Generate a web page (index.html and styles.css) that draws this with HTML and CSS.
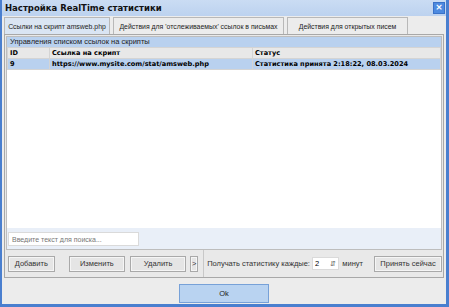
FILE: index.html
```html
<!DOCTYPE html>
<html lang="ru">
    <head>
        <meta charset="UTF-8" />
        <title>Настройка RealTime статистики</title>
        <link rel="stylesheet" href="styles.css">
    </head>
    <body>
        <div class="window">
            <div class="titlebar">
                <span class="title">Настройка RealTime статистики</span>
                <span class="close">&#215;</span>
            </div>
            <div class="client">
                <div class="tabs">
                    <div class="tab active w-tab1">Ссылки на скрипт amsweb.php</div>
                    <div class="tab w-tab2">Действия для 'отслеживаемых' ссылок в письмах</div>
                    <div class="tab w-tab3">Действия для открытых писем</div>
                </div>
                <div class="page">
                    <div class="group">
                        <div class="group-caption">Управления списком ссылок на скрипты</div>
                        <div class="grid">
                            <table>
                                <tr>
                                    <th class="col-id">ID</th>
                                    <th class="col-url">Ссылка на скрипт</th>
                                    <th>Статус</th>
                                </tr>
                                <tr class="selected">
                                    <td>9</td>
                                    <td>https://www.mysite.com/stat/amsweb.php</td>
                                    <td>Статистика принята 2:18:22, 08.03.2024</td>
                                </tr>
                            </table>
                        </div>
                        <div class="search-bar">
                            <input type="text" class="search" placeholder="Введите текст для поиска..." />
                        </div>
                    </div>
                    <div class="toolbar">
                        <button class="btn w-add">Добавить</button>
                        <button class="btn w-edit">Изменить</button>
                        <button class="btn w-del">Удалить</button>
                        <button class="btn w-more">&gt;</button>
                        <span class="sep"></span>
                        <span class="label">Получать статистику каждые:</span>
                        <span class="spin"><span>2</span><span class="spin-arr">&#8693;</span></span>
                        <span class="label minutes">минут</span>
                        <button class="btn w-now">Принять сейчас</button>
                    </div>
                </div>
                <div class="footer">
                    <button class="ok">Ok</button>
                </div>
            </div>
        </div>
    </body>
</html>
```
FILE: styles.css
```css
body {
    margin: 0;
    font-family: "Liberation Sans", Arial, sans-serif;
    font-size: 7.5px;
    color: #000;
}
.window {
    width: 449px;
    height: 307px;
    box-sizing: border-box;
    border: 2px solid #4a7fcf;
    border-top: none;
    border-right-width: 3px;
    border-bottom-width: 3px;
    background-color: #ececec;
    display: flex;
    flex-direction: column;
}
.titlebar {
    height: 16px;
    flex: none;
    box-sizing: border-box;
    background: linear-gradient(#cadcf3, #bcd2ef);
    display: flex;
    align-items: center;
    justify-content: space-between;
    padding: 0 1px 0 3px;
}
.title {
    font-family: "DejaVu Sans", sans-serif;
    font-weight: bold;
    font-size: 8.5px;
    color: #111;
    white-space: nowrap;
}
.close {
    width: 10px;
    height: 10px;
    background-color: #4d8ae0;
    border: 1px solid #3a72c8;
    color: #fff;
    font-family: "DejaVu Sans", sans-serif;
    font-size: 9px;
    font-weight: bold;
    line-height: 9px;
    text-align: center;
}
.client {
    flex: 1;
    display: flex;
    flex-direction: column;
    padding: 0 2px;
}
.tabs {
    display: flex;
    gap: 3px;
    padding-top: 1px;
    height: 18px;
    box-sizing: border-box;
    flex: none;
}
.tab {
    border: 1px solid #b8b8b8;
    border-bottom: none;
    background-color: #ececec;
    display: flex;
    align-items: center;
    justify-content: center;
    font-size: 6.9px;
    color: #222;
    white-space: nowrap;
    box-sizing: border-box;
}
.tab.active {
    background-color: #dae5f3;
}
.w-tab1 {
    width: 106px;
}
.w-tab2 {
    width: 171px;
}
.w-tab3 {
    width: 121px;
}
.page {
    flex: 1;
    border: 1px solid #a8a8a8;
    background-color: #e9e9e9;
    display: flex;
    flex-direction: column;
    padding: 1px 1px 0 1px;
}
.group {
    flex: 1;
    display: flex;
    flex-direction: column;
    border: 1px solid #bdbdbd;
}
.group-caption {
    background-color: #b9d1ef;
    height: 10px;
    line-height: 10px;
    padding-left: 3px;
    color: #222;
    white-space: nowrap;
}
.grid {
    flex: 1;
    background-color: #fff;
}
table {
    width: 100%;
    border-collapse: collapse;
    font-family: "DejaVu Sans", sans-serif;
    font-weight: bold;
    font-size: 6.6px;
}
th, td {
    text-align: left;
    padding: 0 2px;
    height: 10px;
    line-height: 10px;
    border: 1px solid #d4d4d4;
    white-space: nowrap;
}
th {
    background-color: #e8e8e8;
}
.col-id {
    width: 37px;
}
.col-url {
    width: 198px;
}
.selected td {
    background-color: #b9d1ef;
}
.search-bar {
    background-color: #e9eff8;
    height: 21px;
    box-sizing: border-box;
    padding: 4px 0 0 1px;
}
.search {
    display: block;
    width: 131px;
    height: 14px;
    box-sizing: border-box;
    border: 1px solid #dadada;
    font-family: "Liberation Sans", Arial, sans-serif;
    font-size: 7px;
    padding: 0 3px;
    margin: 0;
}
.search::placeholder {
    color: #777;
}
.toolbar {
    height: 27px;
    flex: none;
    display: flex;
    align-items: center;
    padding-left: 2px;
    box-sizing: border-box;
}
.btn {
    height: 16px;
    border: 1px solid #a9a9a9;
    background-color: #e5e5e5;
    box-shadow: inset 0 0 0 1px #f5f5f5;
    font-family: "Liberation Sans", Arial, sans-serif;
    font-size: 7.5px;
    color: #333;
    padding: 0;
    box-sizing: border-box;
}
.w-add {
    width: 48px;
}
.w-edit {
    width: 58px;
    margin-left: 14px;
}
.w-del {
    width: 58px;
    margin-left: 5px;
}
.w-more {
    width: 8px;
    margin-left: 4px;
}
.w-now {
    width: 70px;
    margin-left: 11px;
}
.sep {
    width: 1px;
    height: 27px;
    background-color: #c8c8c8;
    margin: 0 3px 0 5px;
}
.label {
    color: #333;
    white-space: nowrap;
}
.minutes {
    margin-left: 3px;
}
.spin {
    width: 28px;
    height: 13px;
    background-color: #fff;
    border: 1px solid #dadada;
    display: flex;
    align-items: center;
    justify-content: space-between;
    padding: 0 2px;
    box-sizing: border-box;
    margin-left: 2px;
    font-size: 7.5px;
}
.spin-arr {
    font-size: 7px;
    color: #555;
}
.footer {
    height: 26px;
    flex: none;
    display: flex;
    justify-content: center;
    align-items: flex-start;
    padding-top: 6px;
    box-sizing: border-box;
}
.ok {
    width: 90px;
    height: 19px;
    background-color: #b9d3f1;
    border: 1px solid #77a1d8;
    font-family: "Liberation Sans", Arial, sans-serif;
    font-size: 7.5px;
    color: #222;
}
```
